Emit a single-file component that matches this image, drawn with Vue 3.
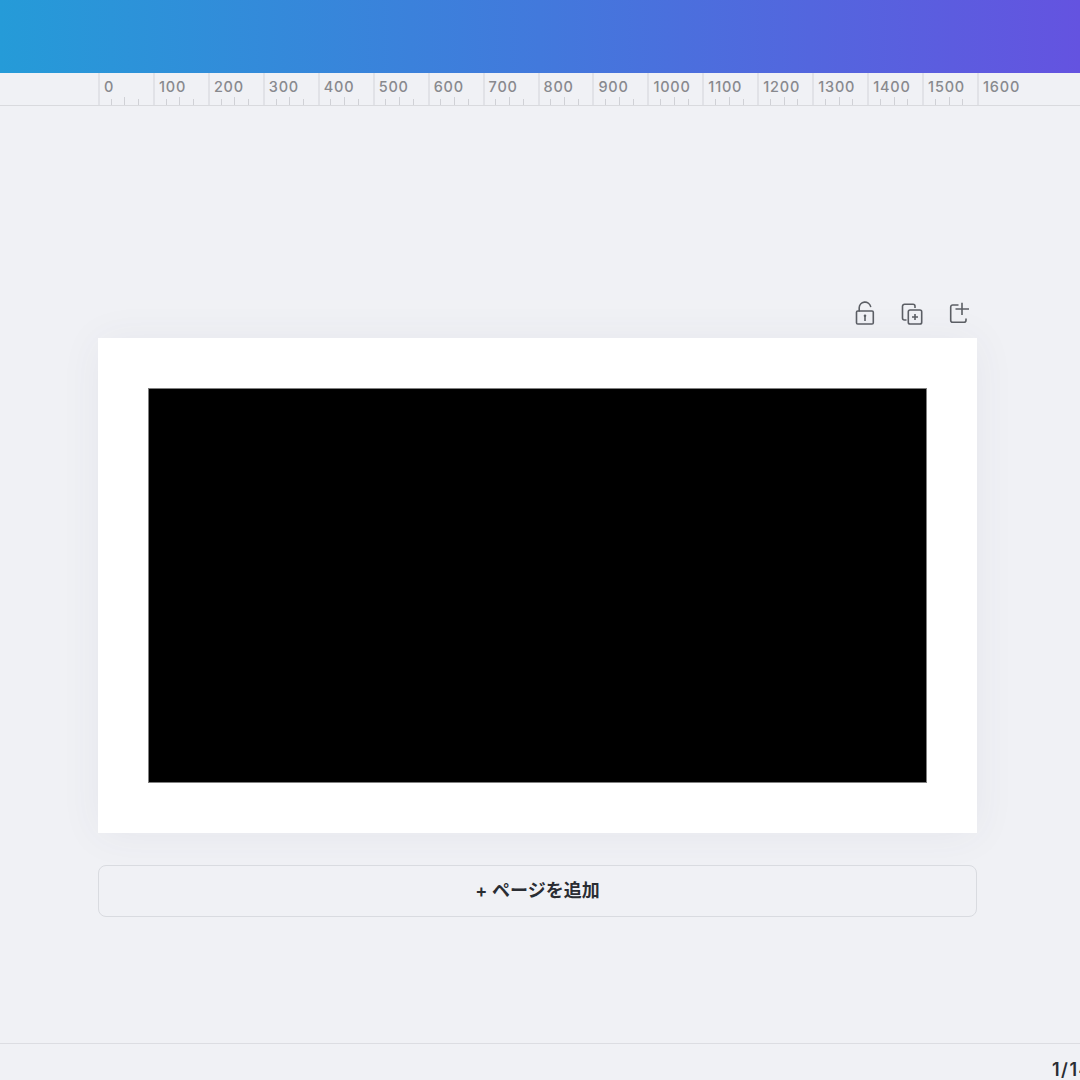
<script setup>
const marks = Array.from({ length: 17 }, (_, i) => i * 100)
</script>

<template>
  <div class="screen">
    <header class="topbar"></header>
    <div class="ruler">
      <div v-for="m in marks" :key="m" class="cell">
        <span class="label">{{ m }}</span>
        <div v-if="m < 1600" class="ticks"><i></i><i class="mid"></i><i></i><b></b></div>
      </div>
    </div>
    <main class="canvas">
      <div class="tools">
        <svg width="24" height="24" viewBox="0 0 24 24" fill="none" stroke="#5c5f65" stroke-width="1.6">
          <path d="M6.200 10V6.800a5.800 5.800 0 0 1 11.400-1.400" stroke-linecap="round" />
          <rect x="3.500" y="10" width="16.800" height="13" rx="1.300" />
          <path d="M12 15v5" />
          <circle cx="12" cy="14.800" r="1.300" fill="#5c5f65" stroke="none" />
        </svg>
        <svg width="24" height="24" viewBox="0 0 24 24" fill="none" stroke="#5c5f65" stroke-width="1.6">
          <path d="M6.500 19H4.500a2 2 0 0 1-2-2V5.300a2 2 0 0 1 2-2h8.500a2 2 0 0 1 2 2V7" />
          <rect x="8.300" y="9" width="13.400" height="14" rx="1.800" />
          <path d="M15 13v6M12 16h6" />
        </svg>
        <svg width="24" height="24" viewBox="0 0 24 24" fill="none" stroke="#5c5f65" stroke-width="1.6">
          <path d="M11.500 4H5.700a2 2 0 0 0-2 2v13.300a2 2 0 0 0 2 2H17a2 2 0 0 0 2-2V17.500" />
          <path d="M15 1.700V14M8.500 8H22" />
        </svg>
      </div>
      <section class="page">
        <div class="frame"></div>
      </section>
      <button class="add">+ ページを追加</button>
    </main>
    <footer class="footer"><span class="count">1/14</span></footer>
  </div>
</template>

<style scoped>
.screen {
  width: 1080px;
  height: 1080px;
  overflow: hidden;
  display: flex;
  flex-direction: column;
  background: #f0f1f5;
  font-family: Inter, "Noto Sans CJK JP", sans-serif;
}
.topbar {
  flex: none;
  height: 73px;
  background: linear-gradient(90deg, #259bd8 0%, #4279dc 50%, #6453e0 100%);
}
.ruler {
  flex: none;
  height: 33px;
  box-sizing: border-box;
  padding-left: 98px;
  display: flex;
  border-bottom: 1px solid #d9dade;
}
.cell {
  position: relative;
  flex: none;
  width: 54.94px;
  box-sizing: border-box;
  border-left: 2px solid #e1e2e7;
}
.label {
  display: block;
  padding: 5px 0 0 4px;
  font-size: 14.5px;
  font-weight: 500;
  letter-spacing: 0.8px;
  line-height: 18px;
  color: #88898e;
  white-space: nowrap;
}
.ticks {
  position: absolute;
  left: -2px;
  right: 0;
  bottom: 0;
  height: 8px;
  display: grid;
  grid-template-columns: repeat(4, 1fr);
}
.ticks i {
  align-self: end;
  justify-self: end;
  width: 1px;
  height: 6px;
  background: #d0d1d6;
}
.ticks i.mid {
  height: 8px;
}
.canvas {
  flex: 1;
  min-height: 0;
  box-sizing: border-box;
  padding: 194px 103px 0 98px;
  display: flex;
  flex-direction: column;
}
.tools {
  height: 38px;
  box-sizing: border-box;
  padding: 1px 6px 0 0;
  display: flex;
  justify-content: flex-end;
  align-items: flex-start;
  gap: 23px;
}
.page {
  height: 495px;
  box-sizing: border-box;
  padding: 50px;
  background: #fff;
  box-shadow: 0 2px 40px rgba(64, 70, 100, 0.06);
}
.frame {
  height: 395px;
  background: #000;
  box-shadow: inset 0 0 0 1px #808080;
}
.add {
  margin-top: 32px;
  height: 52px;
  padding: 0;
  border: 1px solid #d9dbe0;
  border-radius: 8px;
  background: transparent;
  font: 600 18px/1 Inter, "Noto Sans CJK JP", sans-serif;
  color: #2a2d33;
}
.footer {
  flex: none;
  height: 37px;
  box-sizing: border-box;
  border-top: 1px solid #dcdde2;
  padding: 15px 0 0 1052px;
  white-space: nowrap;
  overflow: hidden;
}
.count {
  font-size: 18px;
  font-weight: 600;
  letter-spacing: 1.5px;
  line-height: 22px;
  color: #2a2d33;
}
</style>
